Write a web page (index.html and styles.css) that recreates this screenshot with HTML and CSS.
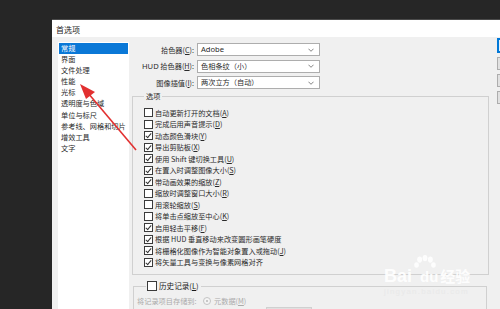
FILE: index.html
```html
<!DOCTYPE html>
<html lang="zh">
<head>
<meta charset="utf-8">
<title>首选项</title>
<link rel="stylesheet" href="styles.css">
</head>
<body>
<div class="dialog">
  <div class="titlebar">首选项</div>
  <div class="content">
    <ul class="sidebar">
      <li class="sel">常规</li>
      <li>界面</li>
      <li>文件处理</li>
      <li>性能</li>
      <li>光标</li>
      <li>透明度与色域</li>
      <li>单位与标尺</li>
      <li>参考线、网格和切片</li>
      <li>增效工具</li>
      <li>文字</li>
    </ul>
    <div class="main">
      <div class="form">
        <label class="lbl">拾色器(<u>C</u>):</label>
        <div class="select"><span class="latin">Adobe</span><svg class="chev" viewBox="0 0 7 4"><polyline points="0.5,0.5 3.5,3.5 6.5,0.5"/></svg></div>
        <label class="lbl"><span class="latin">HUD</span> 拾色器(<u>H</u>):</label>
        <div class="select"><span>色相条纹（小）</span><svg class="chev" viewBox="0 0 7 4"><polyline points="0.5,0.5 3.5,3.5 6.5,0.5"/></svg></div>
        <label class="lbl">图像插值(<u>I</u>):</label>
        <div class="select"><span>两次立方（自动）</span><svg class="chev" viewBox="0 0 7 4"><polyline points="0.5,0.5 3.5,3.5 6.5,0.5"/></svg></div>
      </div>
      <fieldset class="group options">
        <legend>选项</legend>
        <div class="cb"><i class="box"></i>自动更新打开的文档(<u>A</u>)</div>
        <div class="cb"><i class="box"></i>完成后用声音提示(<u>D</u>)</div>
        <div class="cb"><i class="box on"></i>动态颜色滑块(<u>Y</u>)</div>
        <div class="cb"><i class="box on"></i>导出剪贴板(<u>X</u>)</div>
        <div class="cb"><i class="box on"></i>使用 Shift 键切换工具(<u>U</u>)</div>
        <div class="cb"><i class="box on"></i>在置入时调整图像大小(<u>S</u>)</div>
        <div class="cb"><i class="box on"></i>带动画效果的缩放(<u>Z</u>)</div>
        <div class="cb"><i class="box"></i>缩放时调整窗口大小(<u>R</u>)</div>
        <div class="cb"><i class="box"></i>用滚轮缩放(<u>S</u>)</div>
        <div class="cb"><i class="box"></i>将单击点缩放至中心(<u>K</u>)</div>
        <div class="cb"><i class="box on"></i>启用轻击平移(<u>F</u>)</div>
        <div class="cb"><i class="box on"></i>根据 HUD 垂直移动来改变圆形画笔硬度</div>
        <div class="cb"><i class="box on"></i>将栅格化图像作为智能对象置入或拖动(<u>J</u>)</div>
        <div class="cb"><i class="box on"></i>将矢量工具与变换与像素网格对齐</div>
      </fieldset>
      <fieldset class="group history">
        <legend><i class="box"></i>历史记录(<u>L</u>)</legend>
        <div class="hrow">
          <span class="dim">将记录项目存储到:</span>
          <span class="radio"></span><span class="dim">元数据(<u>M</u>)</span>
        </div>
        <div class="hrow2">
          <i class="box dimbox"></i><span class="dim">文本文件(<u>T</u>)</span>
          <span class="btn-dim">选取...</span>
        </div>
      </fieldset>
    </div>
    <div class="buttons">
      <div class="btn primary">确定</div>
      <div class="btn">复位</div>
      <div class="btn">上一个</div>
      <div class="btn">下一个</div>
    </div>
  </div>
</div>

<div class="watermark">
  <svg class="paw" viewBox="0 0 30 26">
    <ellipse cx="8" cy="6" rx="3.2" ry="4"/>
    <ellipse cx="15" cy="4" rx="3.2" ry="4"/>
    <ellipse cx="22" cy="6" rx="3.2" ry="4"/>
    <ellipse cx="26" cy="13" rx="3" ry="3.6"/>
    <ellipse cx="4" cy="13" rx="3" ry="3.6"/>
  </svg>
  <div class="wm-text"><span>Bai</span><span class="du">du</span><span class="jy">经验</span></div>
  <div class="wm-url">jingyan.baidu.com</div>
</div>

<svg class="arrow" viewBox="0 0 500 309">
  <line x1="136" y1="150" x2="88" y2="93"/>
  <polygon points="80,84 95,92 86,99"/>
</svg>
</body>
</html>
```

FILE: styles.css
```css
html, body {
  margin: 0;
  padding: 0;
}
body {
  width: 500px;
  height: 309px;
  overflow: hidden;
  background: #262626;
  font-family: "Noto Sans CJK SC", "Noto Sans", sans-serif;
  font-size: 7.2px;
  color: #2a2a2a;
  position: relative;
}
u { text-decoration: underline; text-underline-offset: 1px; }
.latin { font-family: "Noto Sans", "Liberation Sans", sans-serif; font-size: 7.6px; }

.dialog {
  margin: 19px 0 0 52px;
  width: 560px;
  height: 300px;
  background: #f0f0f0;
  border-top: 1px solid #4a4a4a;
}
.titlebar {
  height: 17px;
  line-height: 19px;
  background: #ffffff;
  padding-left: 4px;
  font-size: 8px;
  color: #1a1a1a;
}
.content {
  display: flex;
  align-items: flex-start;
  padding-top: 5px;
  height: 280px;
}
.sidebar {
  list-style: none;
  margin: 0 0 0 6px;
  padding: 1px;
  width: 69px;
  height: 270px;
  background: #ffffff;
  flex-shrink: 0;
}
.sidebar li {
  height: 11.1px;
  line-height: 11.1px;
  padding-left: 2px;
  white-space: nowrap;
  overflow: hidden;
  color: #2a2a2a;
}
.sidebar li.sel {
  background: #0a78d7;
  color: #ffffff;
}
.main {
  margin-left: 3px;
  width: 357px;
  flex-shrink: 0;
}
.form {
  display: grid;
  grid-template-columns: 62px 123px;
  column-gap: 3px;
  row-gap: 3.5px;
  margin-top: 1px;
  align-items: center;
}
.lbl {
  text-align: right;
  white-space: nowrap;
}
.select {
  height: 11px;
  border: 1px solid #adadad;
  background: #ffffff;
  display: flex;
  align-items: center;
  justify-content: space-between;
  padding: 0 5px 0 3px;
  line-height: 11px;
}
.chev {
  width: 6px;
  height: 4px;
}
.chev polyline {
  fill: none;
  stroke: #707070;
  stroke-width: 1;
}
.group {
  margin: 0;
  border: 1px solid #d0d0d0;
  min-width: 0;
}
.group legend {
  padding: 0 2px;
  line-height: 12px;
}
.options {
  margin-top: 1px;
  padding: 5px 0 6px 11px;
}
.cb {
  display: flex;
  align-items: center;
  height: 11.5px;
  white-space: nowrap;
}
.box {
  display: inline-block;
  box-sizing: border-box;
  width: 9px;
  height: 9px;
  border: 1px solid #3a3a3a;
  background: #ffffff;
  margin-right: 2px;
  flex-shrink: 0;
  position: relative;
}
.box.on::after {
  content: "";
  position: absolute;
  left: 2px;
  top: 0px;
  width: 2px;
  height: 5px;
  border: solid #333333;
  border-width: 0 1px 1px 0;
  transform: rotate(40deg);
}
.history {
  margin-top: 5px;
  margin-left: 1px;
  width: 349px;
  padding: 0 0 0 3px;
  height: 40px;
}
.history legend {
  display: flex;
  align-items: center;
  font-size: 7.6px;
  margin-left: 9px;
  padding: 0 2px 0 1px;
  color: #1a1a1a;
}
.history legend .box {
  width: 10px;
  height: 10px;
  margin-right: 2px;
}
.hrow {
  display: flex;
  align-items: center;
  height: 12px;
  margin-top: 3px;
  white-space: nowrap;
}
.dim {
  color: #ababab;
  white-space: nowrap;
}
.hrow > .dim:first-child {
  width: 62px;
  margin-right: 4px;
}
.radio {
  box-sizing: border-box;
  width: 8px;
  height: 8px;
  border: 1px solid #c4c4c4;
  border-radius: 50%;
  background: #f4f4f4;
  margin-right: 3px;
  position: relative;
  flex-shrink: 0;
}
.radio::after {
  content: "";
  position: absolute;
  left: 2px;
  top: 2px;
  width: 2px;
  height: 2px;
  border-radius: 50%;
  background: #b8b8b8;
}
.hrow2 {
  display: flex;
  align-items: center;
  height: 12px;
  margin-left: 62px;
  white-space: nowrap;
}
.dimbox { border-color: #c4c4c4; }
.btn-dim {
  margin-left: 18px;
  width: 44px;
  height: 10px;
  background: #e0e0e0;
  border: 1px solid #d0d0d0;
  color: #a8a8a8;
  line-height: 10px;
  text-align: center;
}
.buttons {
  margin-left: 8px;
  display: flex;
  flex-direction: column;
  gap: 4px;
  margin-top: -4px;
}
.btn {
  width: 60px;
  height: 11px;
  border: 1px solid #adadad;
  background: #e1e1e1;
  text-align: center;
  line-height: 11px;
}
.btn.primary {
  border: 2px solid #0078d7;
  height: 11px;
  background: #e5f1fb;
}

.watermark {
  position: absolute;
  left: 384px;
  top: 255px;
  width: 110px;
  color: #ffffff;
}
.paw {
  position: absolute;
  left: 26px;
  top: 0;
  width: 30px;
  height: 20px;
  fill: #ffffff;
  opacity: 0.9;
}
.wm-text {
  position: relative;
  margin-top: 11px;
  font-family: "Liberation Sans", sans-serif;
  font-size: 18px;
  font-weight: bold;
  line-height: 20px;
  opacity: 0.92;
  white-space: nowrap;
}
.wm-text .du { margin-left: 8px; font-size: 15px; }
.wm-text .jy {
  font-family: "Noto Sans CJK SC", sans-serif;
  font-size: 15px;
  margin-left: 2px;
}
.wm-url {
  font-family: "Liberation Sans", sans-serif;
  font-size: 8px;
  color: #e6e6e6;
  letter-spacing: 1.2px;
  opacity: 0.7;
  white-space: nowrap;
}

.arrow {
  position: absolute;
  left: 0;
  top: 0;
  width: 500px;
  height: 309px;
  pointer-events: none;
}
.arrow line {
  stroke: #e23030;
  stroke-width: 1.6;
}
.arrow polygon {
  fill: #e23030;
}
```
